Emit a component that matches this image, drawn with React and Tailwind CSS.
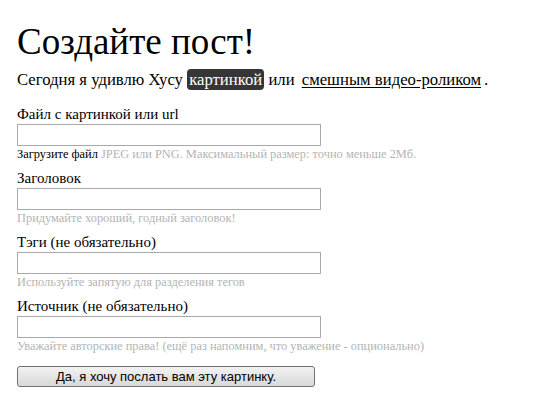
const fields = [
  { label: 'Файл с картинкой или url', hint: 'JPEG или PNG. Максимальный размер: точно меньше 2Мб.', lead: 'Загрузите файл' },
  { label: 'Заголовок', hint: 'Придумайте хороший, годный заголовок!' },
  { label: 'Тэги (не обязательно)', hint: 'Используйте запятую для разделения тегов' },
  { label: 'Источник (не обязательно)', hint: 'Уважайте авторские права! (ещё раз напомним, что уважение - опционально)' },
]

function Field({ label, hint, lead }) {
  return (
    <div className="flex flex-col">
      <label className="text-[15px] leading-[20px] text-black">{label}</label>
      <input className="h-[22px] w-[304px] border border-[#a9a9a9] bg-white px-1 outline-none" type="text" />
      <div className="text-[12.4px] leading-[16px] text-[#b4b4b4]">
        {lead && <span className="text-black">{lead} </span>}
        {hint}
      </div>
    </div>
  )
}

export default function App() {
  return (
    <div className="min-h-[416px] bg-white px-[17px] pt-[20px] font-['Liberation_Serif',serif] text-black">
      <h1 className="text-[37px] leading-[44px] font-normal">Создайте пост!</h1>
      <p className="mt-[6px] text-[16.7px] leading-[20px]">
        Сегодня я удивлю Хусу{' '}
        <span className="rounded-[4px] bg-[#363636] px-[2px] py-[1px] text-white">картинкой</span>{' '}
        или{' '}
        <a className="px-[3px] underline underline-offset-2" href="#">смешным видео-роликом</a>.
      </p>
      <form className="mt-[14px] flex flex-col gap-[6px]">
        {fields.map((field) => (
          <Field key={field.label} {...field} />
        ))}
        <button
          className="mt-[6px] h-[21px] w-[298px] rounded-[3px] border border-[#707070] bg-gradient-to-b from-[#f2f2f2] to-[#d8d8d8] font-['Liberation_Sans',sans-serif] text-[13px] leading-[19px] text-black"
          type="button"
        >
          Да, я хочу послать вам эту картинку.
        </button>
      </form>
    </div>
  )
}
